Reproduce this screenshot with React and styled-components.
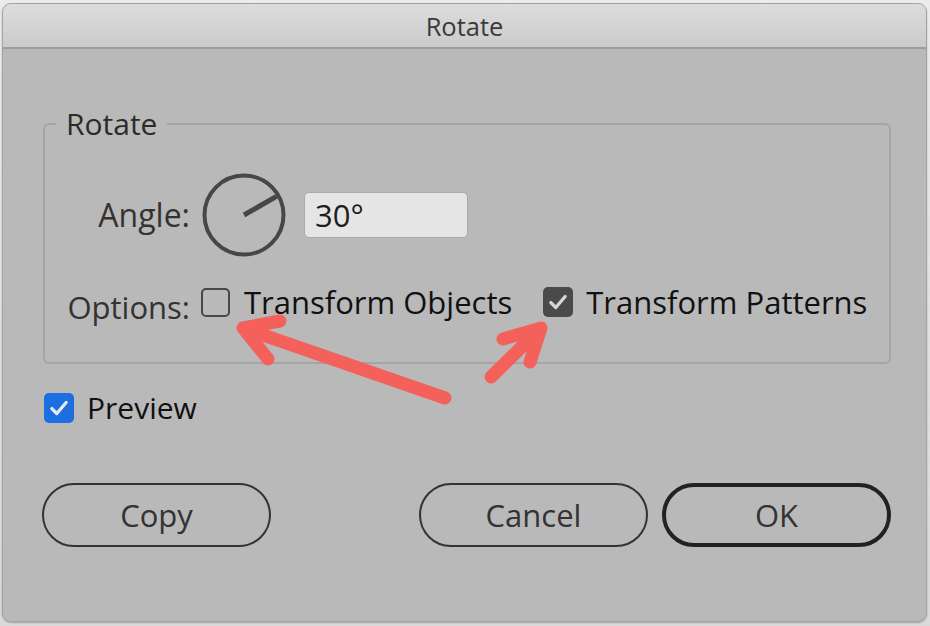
import React from "react";
import styled, { createGlobalStyle } from "styled-components";

const GlobalStyle = createGlobalStyle`
  html, body {
    margin: 0;
    padding: 0;
    background: #e6e6e6;
  }
  body {
    font-family: "Open Sans", "Liberation Sans", sans-serif;
  }
`;

const Page = styled.div`
  position: relative;
  width: 930px;
  height: 626px;
  padding: 3px 3px 4px 2px;
  box-sizing: border-box;
  background: linear-gradient(#ececec, #dadada);
`;

const Window = styled.div`
  width: 100%;
  height: 100%;
  box-sizing: border-box;
  border: 1px solid #a4a4a4;
  border-radius: 9px;
  overflow: hidden;
  display: flex;
  flex-direction: column;
  background: #b9b9b9;
  box-shadow: 0 1px 2px rgba(0, 0, 0, 0.25);
`;

const TitleBar = styled.div`
  height: 43px;
  flex: none;
  display: flex;
  align-items: center;
  justify-content: center;
  background: linear-gradient(#dcdcdc, #cbcbcb);
  border-bottom: 2px solid #9c9c9c;
`;

const Title = styled.span`
  font-size: 25.5px;
  color: #3a3a3a;
  margin-top: 1px;
`;

const Body = styled.div`
  flex: 1;
  display: flex;
  flex-direction: column;
  padding: 60px 35px 0 40px;
`;

const Group = styled.fieldset`
  margin: 0;
  padding: 33px 0 40px 0;
  border: 2px solid #a5a5a5;
  border-radius: 6px;
  min-width: 0;
`;

const Legend = styled.legend`
  margin-left: 11px;
  padding: 0 10px;
  font-size: 30px;
  line-height: 30px;
  color: #2b2b2b;
`;

const FieldGrid = styled.div`
  display: grid;
  grid-template-columns: 145px auto;
  column-gap: 11px;
  row-gap: 24px;
  align-items: center;
`;

const FieldLabel = styled.span`
  justify-self: end;
  font-size: ${(p) => p.$size || 32}px;
  line-height: 30px;
  color: #333333;
  padding-top: ${(p) => (p.$drop ? "10px" : "0")};
`;

const AngleControls = styled.div`
  display: flex;
  align-items: center;
  gap: 17px;
`;

const AngleInput = styled.div`
  width: 164px;
  height: 46px;
  box-sizing: border-box;
  display: flex;
  align-items: center;
  padding-left: 10px;
  background: #e5e5e5;
  border: 1px solid #a9a9a9;
  border-radius: 5px;
  font-size: 31px;
  color: #1e1e1e;
`;

const OptionsRow = styled.div`
  display: flex;
  align-items: center;
  gap: 31px;
`;

const CheckItem = styled.label`
  display: flex;
  align-items: center;
  gap: ${(p) => p.$gap || 13}px;
  font-size: ${(p) => p.$size || 31}px;
  line-height: 30px;
  color: #111111;
`;

const Box = styled.span`
  width: 30px;
  height: 30px;
  box-sizing: border-box;
  flex: none;
  display: flex;
  align-items: center;
  justify-content: center;
  border-radius: 5px;
  background: ${(p) =>
    p.$variant === "blue" ? "#1d6ee0" : p.$variant === "dark" ? "#4a4a4a" : "transparent"};
  border: ${(p) => (p.$variant === "empty" ? "2px solid #474747" : "none")};
  ${(p) => p.$variant === "empty" && "width: 29px; height: 29px;"}
`;

const PreviewRow = styled.div`
  margin-top: 29px;
  margin-left: 1px;
  display: flex;
`;

const ButtonRow = styled.div`
  margin-top: 60px;
  margin-left: -1px;
  display: flex;
  justify-content: space-between;
  align-items: center;
`;

const ButtonGroup = styled.div`
  display: flex;
  gap: 14px;
`;

const Button = styled.button`
  width: 229px;
  height: 64px;
  box-sizing: border-box;
  border-radius: 32px;
  background: transparent;
  border: ${(p) => (p.$primary ? "4px solid #222222" : "2px solid #333333")};
  font-family: "Open Sans", "Liberation Sans", sans-serif;
  font-size: 31px;
  color: #333333;
  padding: 0;
  display: flex;
  align-items: center;
  justify-content: center;
`;

const Overlay = styled.svg`
  position: absolute;
  left: 0;
  top: 0;
  pointer-events: none;
`;

const Check = ({ color }) => (
  <svg width="22" height="22" viewBox="0 0 20 20">
    <polyline
      points="3.5,10.5 8,15 16.5,5"
      fill="none"
      stroke={color}
      strokeWidth="3"
      strokeLinecap="round"
      strokeLinejoin="round"
    />
  </svg>
);

const Dial = () => (
  <svg width="86" height="86" viewBox="0 0 86 86">
    <circle cx="43" cy="43" r="39.5" fill="none" stroke="#474747" strokeWidth="4" />
    <line x1="43" y1="43" x2="75.5" y2="24.3" stroke="#474747" strokeWidth="5" />
  </svg>
);

export default function App() {
  return (
    <>
      <GlobalStyle />
      <Page>
        <Window>
          <TitleBar>
            <Title>Rotate</Title>
          </TitleBar>
          <Body>
            <Group>
              <Legend>Rotate</Legend>
              <FieldGrid>
                <FieldLabel>Angle:</FieldLabel>
                <AngleControls>
                  <Dial />
                  <AngleInput>30°</AngleInput>
                </AngleControls>
                <FieldLabel $drop $size={31}>Options:</FieldLabel>
                <OptionsRow>
                  <CheckItem $gap={14}>
                    <Box $variant="empty" />
                    Transform Objects
                  </CheckItem>
                  <CheckItem $gap={13}>
                    <Box $variant="dark">
                      <Check color="#d6d6d6" />
                    </Box>
                    Transform Patterns
                  </CheckItem>
                </OptionsRow>
              </FieldGrid>
            </Group>
            <PreviewRow>
              <CheckItem $gap={13} $size={30}>
                <Box $variant="blue">
                  <Check color="#e4e9f2" />
                </Box>
                Preview
              </CheckItem>
            </PreviewRow>
            <ButtonRow>
              <Button>Copy</Button>
              <ButtonGroup>
                <Button>Cancel</Button>
                <Button $primary>OK</Button>
              </ButtonGroup>
            </ButtonRow>
          </Body>
        </Window>
        <Overlay width="930" height="626" viewBox="0 0 930 626">
          <g
            fill="none"
            stroke="#f4605a"
            strokeWidth="13"
            strokeLinecap="round"
            strokeLinejoin="round"
          >
            <path d="M445 398 L243 328 M280 321 L243 328 L268 359" />
            <path d="M491 377 L541 328 M503 339 L541 328 L530 362" />
          </g>
        </Overlay>
      </Page>
    </>
  );
}
